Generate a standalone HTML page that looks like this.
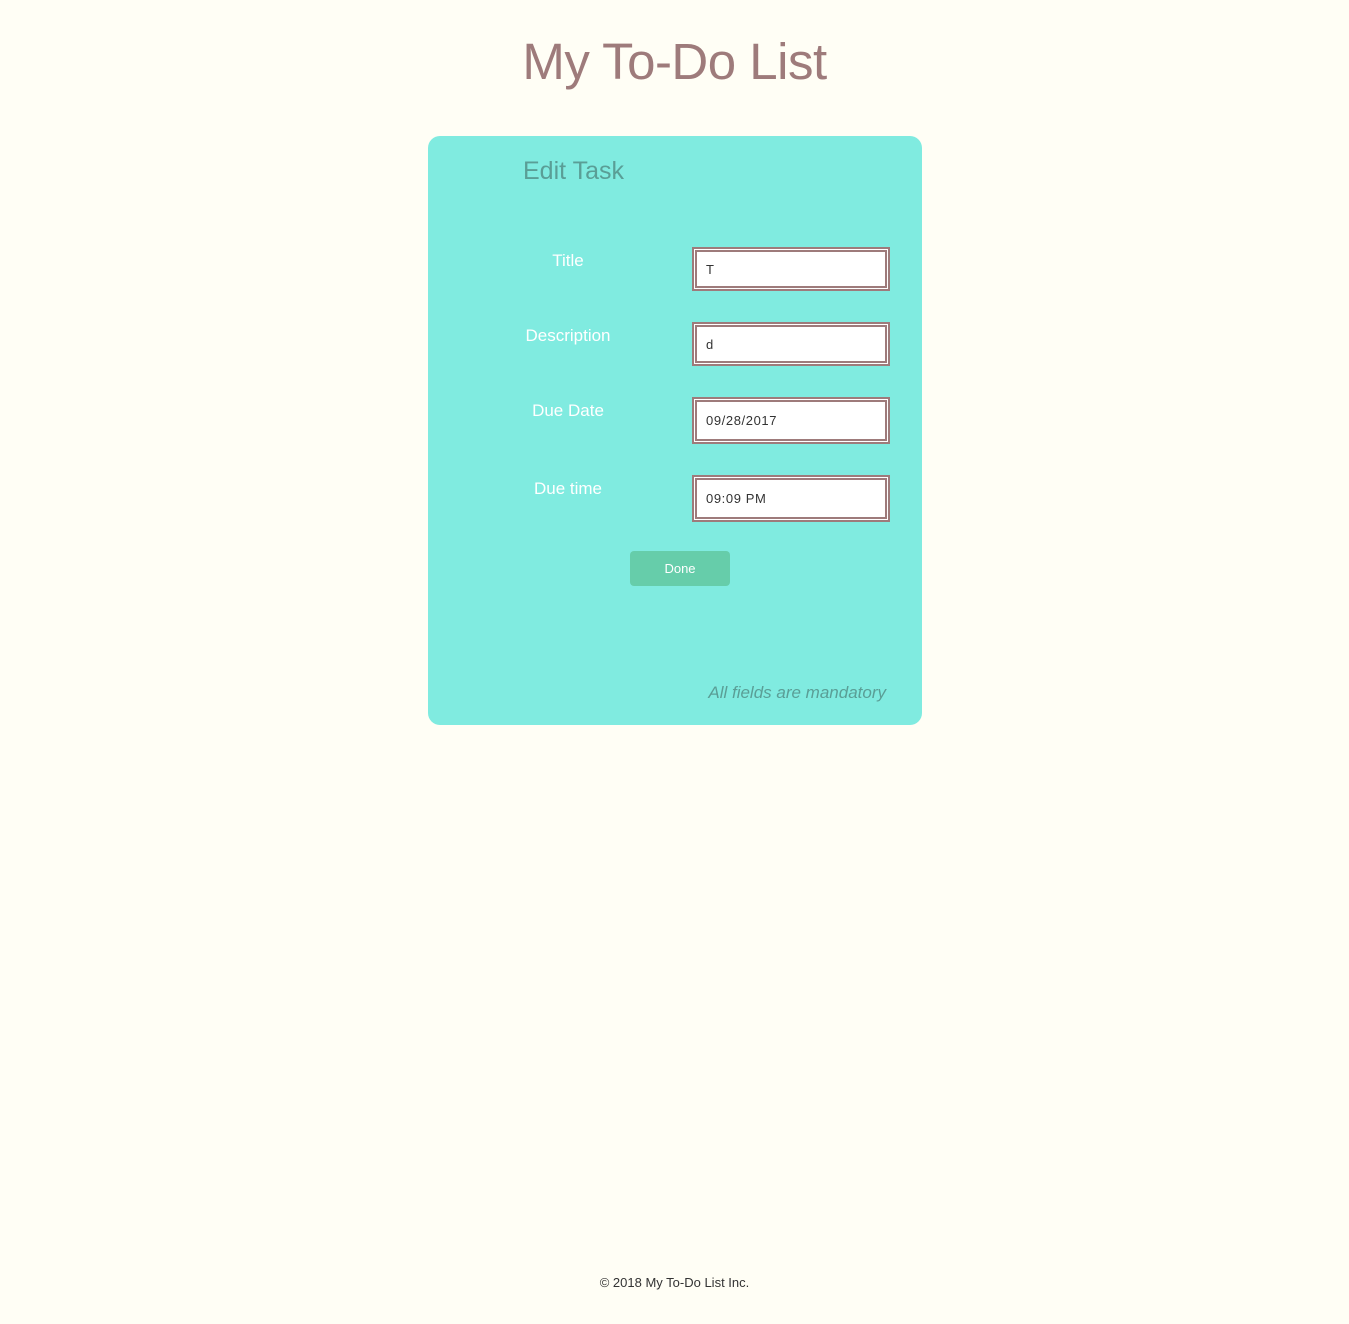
<!DOCTYPE html>
<html><head><meta charset="utf-8"><style>
html,body{margin:0;padding:0;background:#fffef5;width:1349px;height:1324px;position:relative;font-family:"Liberation Sans",sans-serif;overflow:hidden}
.a{position:absolute}
h1{position:absolute;left:0;width:1349px;top:28px;margin:0;text-align:center;font-size:51px;font-weight:normal;color:#9e7b7b;line-height:68px;letter-spacing:-0.5px}
.card{left:428px;top:136px;width:494px;height:589px;background:#80ebe0;border-radius:12px}
.lbl{color:#fff;font-size:17px;width:200px;text-align:center;left:468px}
.in{left:692px;width:188px;background:#fff;border:5px double #9e7b7b;font-size:13px;color:#333;box-sizing:content-box}
.in span{position:absolute;left:9px}
</style></head><body>
<h1>My To-Do List</h1>
<div class="a card"></div>
<div class="a" style="left:523px;top:157px;font-size:25px;color:#5a9e96">Edit Task</div>
<div class="a lbl" style="top:251px">Title</div>
<div class="a lbl" style="top:326px">Description</div>
<div class="a lbl" style="top:401px">Due Date</div>
<div class="a lbl" style="top:479px">Due time</div>
<div class="a in" style="top:247px;height:34px"><span style="top:10px">T</span></div>
<div class="a in" style="top:322px;height:34px"><span style="top:10px">d</span></div>
<div class="a in" style="top:397px;height:37px"><span style="top:11px;letter-spacing:.6px">09/28/2017</span></div>
<div class="a in" style="top:475px;height:37px"><span style="top:11px;letter-spacing:.6px">09:09 PM</span></div>
<div class="a" style="left:630px;top:551px;width:100px;height:35px;background:#66cdaa;border-radius:4px;color:#fff;font-size:13px;text-align:center;line-height:35px">Done</div>
<div class="a" style="left:600px;width:286px;text-align:right;top:683px;font-size:17px;font-style:italic;color:#5a9e96">All fields are mandatory</div>
<div class="a" style="left:0;width:1349px;text-align:center;top:1275px;font-size:13px;color:#333">© 2018 My To-Do List Inc.</div>
</body></html>
